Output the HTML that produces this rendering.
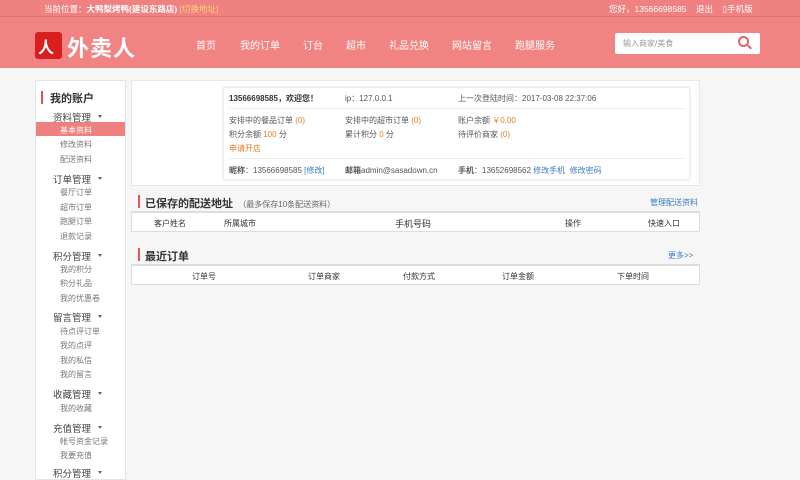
<!DOCTYPE html>
<html><head><meta charset="utf-8"><style>
*{margin:0;padding:0;box-sizing:border-box}
body{width:800px;height:472px;overflow:hidden;background:#f6f6f6;font-family:"Liberation Sans","Noto Sans CJK SC",sans-serif;font-size:8px;color:#555;position:relative}
.a{position:absolute;white-space:nowrap}
.top{position:absolute;left:0;top:0;width:800px;height:17px;background:#ef8181;border-bottom:1px solid #e07474}
.hd{position:absolute;left:0;top:17px;width:800px;height:51px;background:#f28383}
.w{color:#fff}
.nav{font-size:10px;color:#fff;top:37px}
.side{position:absolute;left:35px;top:80px;width:91px;height:400px;background:#fff;border:1px solid #e5e5e5}
.g{font-size:9.5px;color:#444;left:18px}
.g:after{content:"";position:absolute;left:45px;top:5px;border:2.5px solid transparent;border-top:3px solid #666;border-bottom:0}
.s{color:#777;left:24px}
.main{position:absolute;left:131px;top:80px;width:569px;height:106px;background:#fff;border:1px solid #e8e8e8}
.panel{position:absolute;left:223px;top:87px;width:467px;height:93px;background:#fff;border:1px solid #eee;box-shadow:0 0 2px #ddd}
.o{color:#e67e22}.b{color:#3b7bbf}
.th{position:absolute;left:131px;width:569px;height:21px;background:#fff;border:1px solid #ddd;border-top:2px solid #ddd}
.tt{font-size:11px;color:#333;font-weight:bold}
.bar{position:absolute;width:2px;height:13px;background:#e05555}
</style></head><body>
<div class="top"></div>
<div class="a w" style="left:44px;top:3px;font-size:8.5px">当前位置：<b>大鸭梨烤鸭(建设东路店)</b> <span style="color:#ffd27a">[切换地址]</span></div>
<div class="a w" style="left:609px;top:3px;font-size:8.5px">您好，13566698585 &nbsp;&nbsp;&nbsp;退出 &nbsp;&nbsp;&nbsp;▯手机版</div>
<div class="hd"></div>
<div class="a" style="left:35px;top:32px;width:27px;height:27px;background:#d81e1e;border-radius:3px"></div>
<div class="a" style="left:38px;top:34px;color:#fff;font-size:16px;font-weight:bold">人</div>
<div class="a w" style="left:67px;top:31px;font-size:22px;font-weight:bold;letter-spacing:1px">外卖人</div>
<div class="a nav" style="left:196px">首页</div>
<div class="a nav" style="left:240px">我的订单</div>
<div class="a nav" style="left:303px">订台</div>
<div class="a nav" style="left:346px">超市</div>
<div class="a nav" style="left:389px">礼品兑换</div>
<div class="a nav" style="left:452px">网站留言</div>
<div class="a nav" style="left:515px">跑腿服务</div>
<div class="a" style="left:615px;top:33px;width:145px;height:21px;background:#fff;border-radius:2px"></div>
<div class="a" style="left:623px;top:38px;color:#999">输入商家/美食</div>
<div class="a" style="left:738px;top:36px;width:11px;height:11px;border:2px solid #d66;border-radius:50%"></div>
<div class="a" style="left:747px;top:46px;width:5px;height:2px;background:#d66;transform:rotate(45deg)"></div>

<div class="side"></div>
<div class="bar" style="left:41px;top:91px"></div>
<div class="a" style="left:50px;top:90px;font-size:11px;color:#333;font-weight:bold">我的账户</div>
<div class="a" style="left:36px;top:122px;width:89px;height:14px;background:#ef8080"></div>
<div class="a g" style="left:53px;top:110px">资料管理</div>
<div class="a s w" style="left:60px;top:125px;color:#fff">基本资料</div>
<div class="a s" style="left:60px;top:139px">修改资料</div>
<div class="a s" style="left:60px;top:154px">配送资料</div>
<div class="a g" style="left:53px;top:172px">订单管理</div>
<div class="a s" style="left:60px;top:187px">餐厅订单</div>
<div class="a s" style="left:60px;top:202px">超市订单</div>
<div class="a s" style="left:60px;top:216px">跑腿订单</div>
<div class="a s" style="left:60px;top:231px">退款记录</div>
<div class="a g" style="left:53px;top:249px">积分管理</div>
<div class="a s" style="left:60px;top:264px">我的积分</div>
<div class="a s" style="left:60px;top:278px">积分礼品</div>
<div class="a s" style="left:60px;top:293px">我的优惠卷</div>
<div class="a g" style="left:53px;top:310px">留言管理</div>
<div class="a s" style="left:60px;top:326px">待点评订单</div>
<div class="a s" style="left:60px;top:340px">我的点评</div>
<div class="a s" style="left:60px;top:355px">我的私信</div>
<div class="a s" style="left:60px;top:369px">我的留言</div>
<div class="a g" style="left:53px;top:387px">收藏管理</div>
<div class="a s" style="left:60px;top:403px">我的收藏</div>
<div class="a g" style="left:53px;top:421px">充值管理</div>
<div class="a s" style="left:60px;top:436px">帐号资金记录</div>
<div class="a s" style="left:60px;top:450px">我要充值</div>
<div class="a g" style="left:53px;top:466px">积分管理</div>

<div class="main"></div>
<div class="panel"></div>
<div class="a" style="left:229px;top:93px;color:#333;font-weight:bold">13566698585，欢迎您！</div>
<div class="a" style="left:345px;top:93px">ip：127.0.0.1</div>
<div class="a" style="left:458px;top:93px">上一次登陆时间：2017-03-08 22:37:06</div>
<div class="a" style="left:229px;top:108px;width:456px;height:1px;background:#eee"></div>
<div class="a" style="left:229px;top:115px">安排中的餐品订单 <span class="o">(0)</span></div>
<div class="a" style="left:345px;top:115px">安排中的超市订单 <span class="o">(0)</span></div>
<div class="a" style="left:458px;top:115px">账户余额 <span class="o">￥0.00</span></div>
<div class="a" style="left:229px;top:129px">积分余额 <span class="o">100</span> 分</div>
<div class="a" style="left:345px;top:129px">累计积分 <span class="o">0</span> 分</div>
<div class="a" style="left:458px;top:129px">待评价商家 <span class="o">(0)</span></div>
<div class="a o" style="left:229px;top:143px">申请开店</div>
<div class="a" style="left:229px;top:158px;width:456px;height:1px;background:#eee"></div>
<div class="a" style="left:229px;top:165px"><b>昵称</b>：13566698585 <span class="b">[修改]</span></div>
<div class="a" style="left:345px;top:165px"><b>邮箱</b>admin@sasadown.cn</div>
<div class="a" style="left:458px;top:165px"><b>手机</b>：13652698562 <span class="b">修改手机 &nbsp;修改密码</span></div>

<div class="bar" style="left:138px;top:195px"></div>
<div class="a tt" style="left:145px;top:195px">已保存的配送地址 <span style="font-size:8px;font-weight:normal;color:#666">&nbsp;（最多保存10条配送资料）</span></div>
<div class="a b" style="left:650px;top:197px">管理配送资料</div>
<div class="th" style="top:211px"></div>
<div class="a" style="left:154px;top:218px;color:#333">客户姓名</div>
<div class="a" style="left:224px;top:218px;color:#333">所属城市</div>
<div class="a" style="left:395px;top:217px;color:#333;font-size:9px">手机号码</div>
<div class="a" style="left:565px;top:218px;color:#333">操作</div>
<div class="a" style="left:648px;top:218px;color:#333">快速入口</div>

<div class="bar" style="left:138px;top:248px"></div>
<div class="a tt" style="left:145px;top:248px">最近订单</div>
<div class="a b" style="left:668px;top:250px">更多&gt;&gt;</div>
<div class="th" style="top:264px"></div>
<div class="a" style="left:192px;top:271px;color:#333">订单号</div>
<div class="a" style="left:308px;top:271px;color:#333">订单商家</div>
<div class="a" style="left:403px;top:271px;color:#333">付款方式</div>
<div class="a" style="left:502px;top:271px;color:#333">订单金额</div>
<div class="a" style="left:617px;top:271px;color:#333">下单时间</div>
</body></html>
